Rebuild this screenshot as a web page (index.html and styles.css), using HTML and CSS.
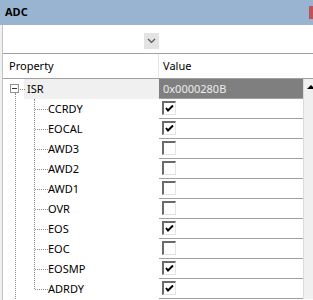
FILE: index.html
```html
<!DOCTYPE html>
<html lang="en">
<head>
  <meta charset="UTF-8">
  <title>ADC</title>
  <link rel="stylesheet" href="styles.css">
</head>
<body>
  <div class="window">
    <div class="titlebar">
      <span class="title">ADC</span>
      <span class="close"></span>
    </div>
    <div class="panel">
      <div class="toolbar">
        <span class="drop">
          <svg width="9" height="6" viewBox="0 0 9 6"><polyline points="1,1 4.5,4.5 8,1" fill="none" stroke="#555" stroke-width="1.2"/></svg>
        </span>
      </div>
      <div class="row head">
        <div class="prop">Property</div>
        <div class="val">Value</div>
      </div>
      <div class="body">
        <div class="tree">
          <div class="row group">
            <div class="prop">
              <span class="toggle"></span>
              <span class="label">ISR</span>
            </div>
            <div class="val reg">0x0000280B</div>
          </div>
          <div class="children">
            <div class="row"><div class="prop">CCRDY</div><div class="val"><span class="check on"></span></div></div>
            <div class="row"><div class="prop">EOCAL</div><div class="val"><span class="check on"></span></div></div>
            <div class="row"><div class="prop">AWD3</div><div class="val"><span class="check"></span></div></div>
            <div class="row"><div class="prop">AWD2</div><div class="val"><span class="check"></span></div></div>
            <div class="row"><div class="prop">AWD1</div><div class="val"><span class="check"></span></div></div>
            <div class="row"><div class="prop">OVR</div><div class="val"><span class="check"></span></div></div>
            <div class="row"><div class="prop">EOS</div><div class="val"><span class="check on"></span></div></div>
            <div class="row"><div class="prop">EOC</div><div class="val"><span class="check"></span></div></div>
            <div class="row"><div class="prop">EOSMP</div><div class="val"><span class="check on"></span></div></div>
            <div class="row"><div class="prop">ADRDY</div><div class="val"><span class="check on"></span></div></div>
          </div>
        </div>
        <div class="scrollbar"><span class="arrow"></span></div>
      </div>
    </div>
  </div>
</body>
</html>
```

FILE: styles.css
```css
/* property grid window */
body {
  margin: 0;
  font-family: "Noto Sans", "DejaVu Sans", sans-serif;
  font-size: 11px;
  color: #000;
  background-color: #f0f0f0;
}

.window {
  width: 313px;
  height: 300px;
  overflow: hidden;
  background-color: #f0f0f0;
}

.titlebar {
  height: 25px;
  background-color: #99b4d1;
  display: flex;
  align-items: flex-start;
}

.title {
  font-weight: bold;
  padding-left: 5px;
  line-height: 24px;
}

.close {
  margin-left: auto;
  margin-top: 6px;
  width: 4px;
  height: 13px;
  background-color: #c75050;
}

.panel {
  margin-left: 2px;
  border-left: 1px solid #c4c4c4;
  background-color: #fff;
  height: 275px;
}

.toolbar {
  height: 28px;
  border-bottom: 1px solid #a0a0a0;
  box-sizing: content-box;
  display: flex;
  align-items: flex-start;
}

.drop {
  margin-left: 141px;
  margin-top: 8px;
  width: 15px;
  height: 16px;
  background-color: #e3e3e3;
  display: flex;
  align-items: center;
  justify-content: center;
}

.row {
  display: grid;
  grid-template-columns: 156px 144px;
  height: 20px;
}

.row .prop {
  position: relative;
  padding-left: 45px;
  line-height: 19px;
  white-space: nowrap;
}

.row .val {
  box-sizing: border-box;
  border-bottom: 1px solid #a0a0a0;
  padding-left: 3px;
  padding-top: 2px;
}

.row.head {
  height: 24px;
  grid-template-columns: 156px 154px;
  border-bottom: 1px solid #a0a0a0;
  box-sizing: content-box;
}

.row.head .prop {
  padding-left: 6px;
  line-height: 24px;
  border-right: 1px solid #e6e6e6;
}

.row.head .val {
  border-bottom: none;
  padding: 0 0 0 4px;
  line-height: 24px;
}

.body {
  display: flex;
}

.tree {
  position: relative;
  width: 300px;
}

/* root level guide line */
.tree::before {
  content: "";
  position: absolute;
  left: 12px;
  top: 14px;
  bottom: 0;
  border-left: 1px dotted #8c8c8c;
}

.row.group .prop {
  display: flex;
  padding-left: 0;
}

.toggle {
  position: relative;
  margin: 5px 0 0 7px;
  width: 9px;
  height: 9px;
  box-sizing: border-box;
  border: 1px solid #919191;
  background-color: #fff;
}

.toggle::before {
  content: "";
  position: absolute;
  left: 1px;
  top: 3px;
  width: 5px;
  border-top: 1px solid #333;
}

.toggle::after {
  content: "";
  position: absolute;
  left: 9px;
  top: 4px;
  width: 5px;
  border-top: 1px dotted #8c8c8c;
}

.label {
  margin-left: 5px;
  flex: 1;
  padding-left: 3px;
  background-color: #f0f0f0;
  line-height: 19px;
}

.val.reg {
  background-color: #7f7f7f;
  color: #ececec;
  padding: 0 0 0 4px;
  line-height: 19px;
}

.children {
  position: relative;
}

.children::before {
  content: "";
  position: absolute;
  left: 31px;
  top: 0;
  bottom: 10px;
  border-left: 1px dotted #8c8c8c;
}

.children .prop::before {
  content: "";
  position: absolute;
  left: 32px;
  top: 10px;
  width: 13px;
  border-top: 1px dotted #8c8c8c;
}

.check {
  display: block;
  width: 14px;
  height: 14px;
  box-sizing: border-box;
  border-top: 2px solid #6a6a6a;
  border-left: 2px solid #6a6a6a;
  border-right: 1px solid #e3e3e3;
  border-bottom: 1px solid #e3e3e3;
  background-color: #fff;
}

.check.on {
  background-image: url("data:image/svg+xml;utf8,<svg xmlns='http://www.w3.org/2000/svg' width='11' height='11' viewBox='0 0 11 11'><polyline points='2,5 4,7.5 9,2.5' fill='none' stroke='black' stroke-width='2'/></svg>");
  background-repeat: no-repeat;
}

.scrollbar {
  width: 9px;
  border-left: 1px solid #dcdcdc;
  background-color: #f0f0f0;
  height: 220px;
}

.arrow {
  display: block;
  margin: 6px 0 0 3px;
  width: 0;
  height: 0;
  border-left: 4px solid transparent;
  border-right: 4px solid transparent;
  border-bottom: 4px solid #000;
}
```
